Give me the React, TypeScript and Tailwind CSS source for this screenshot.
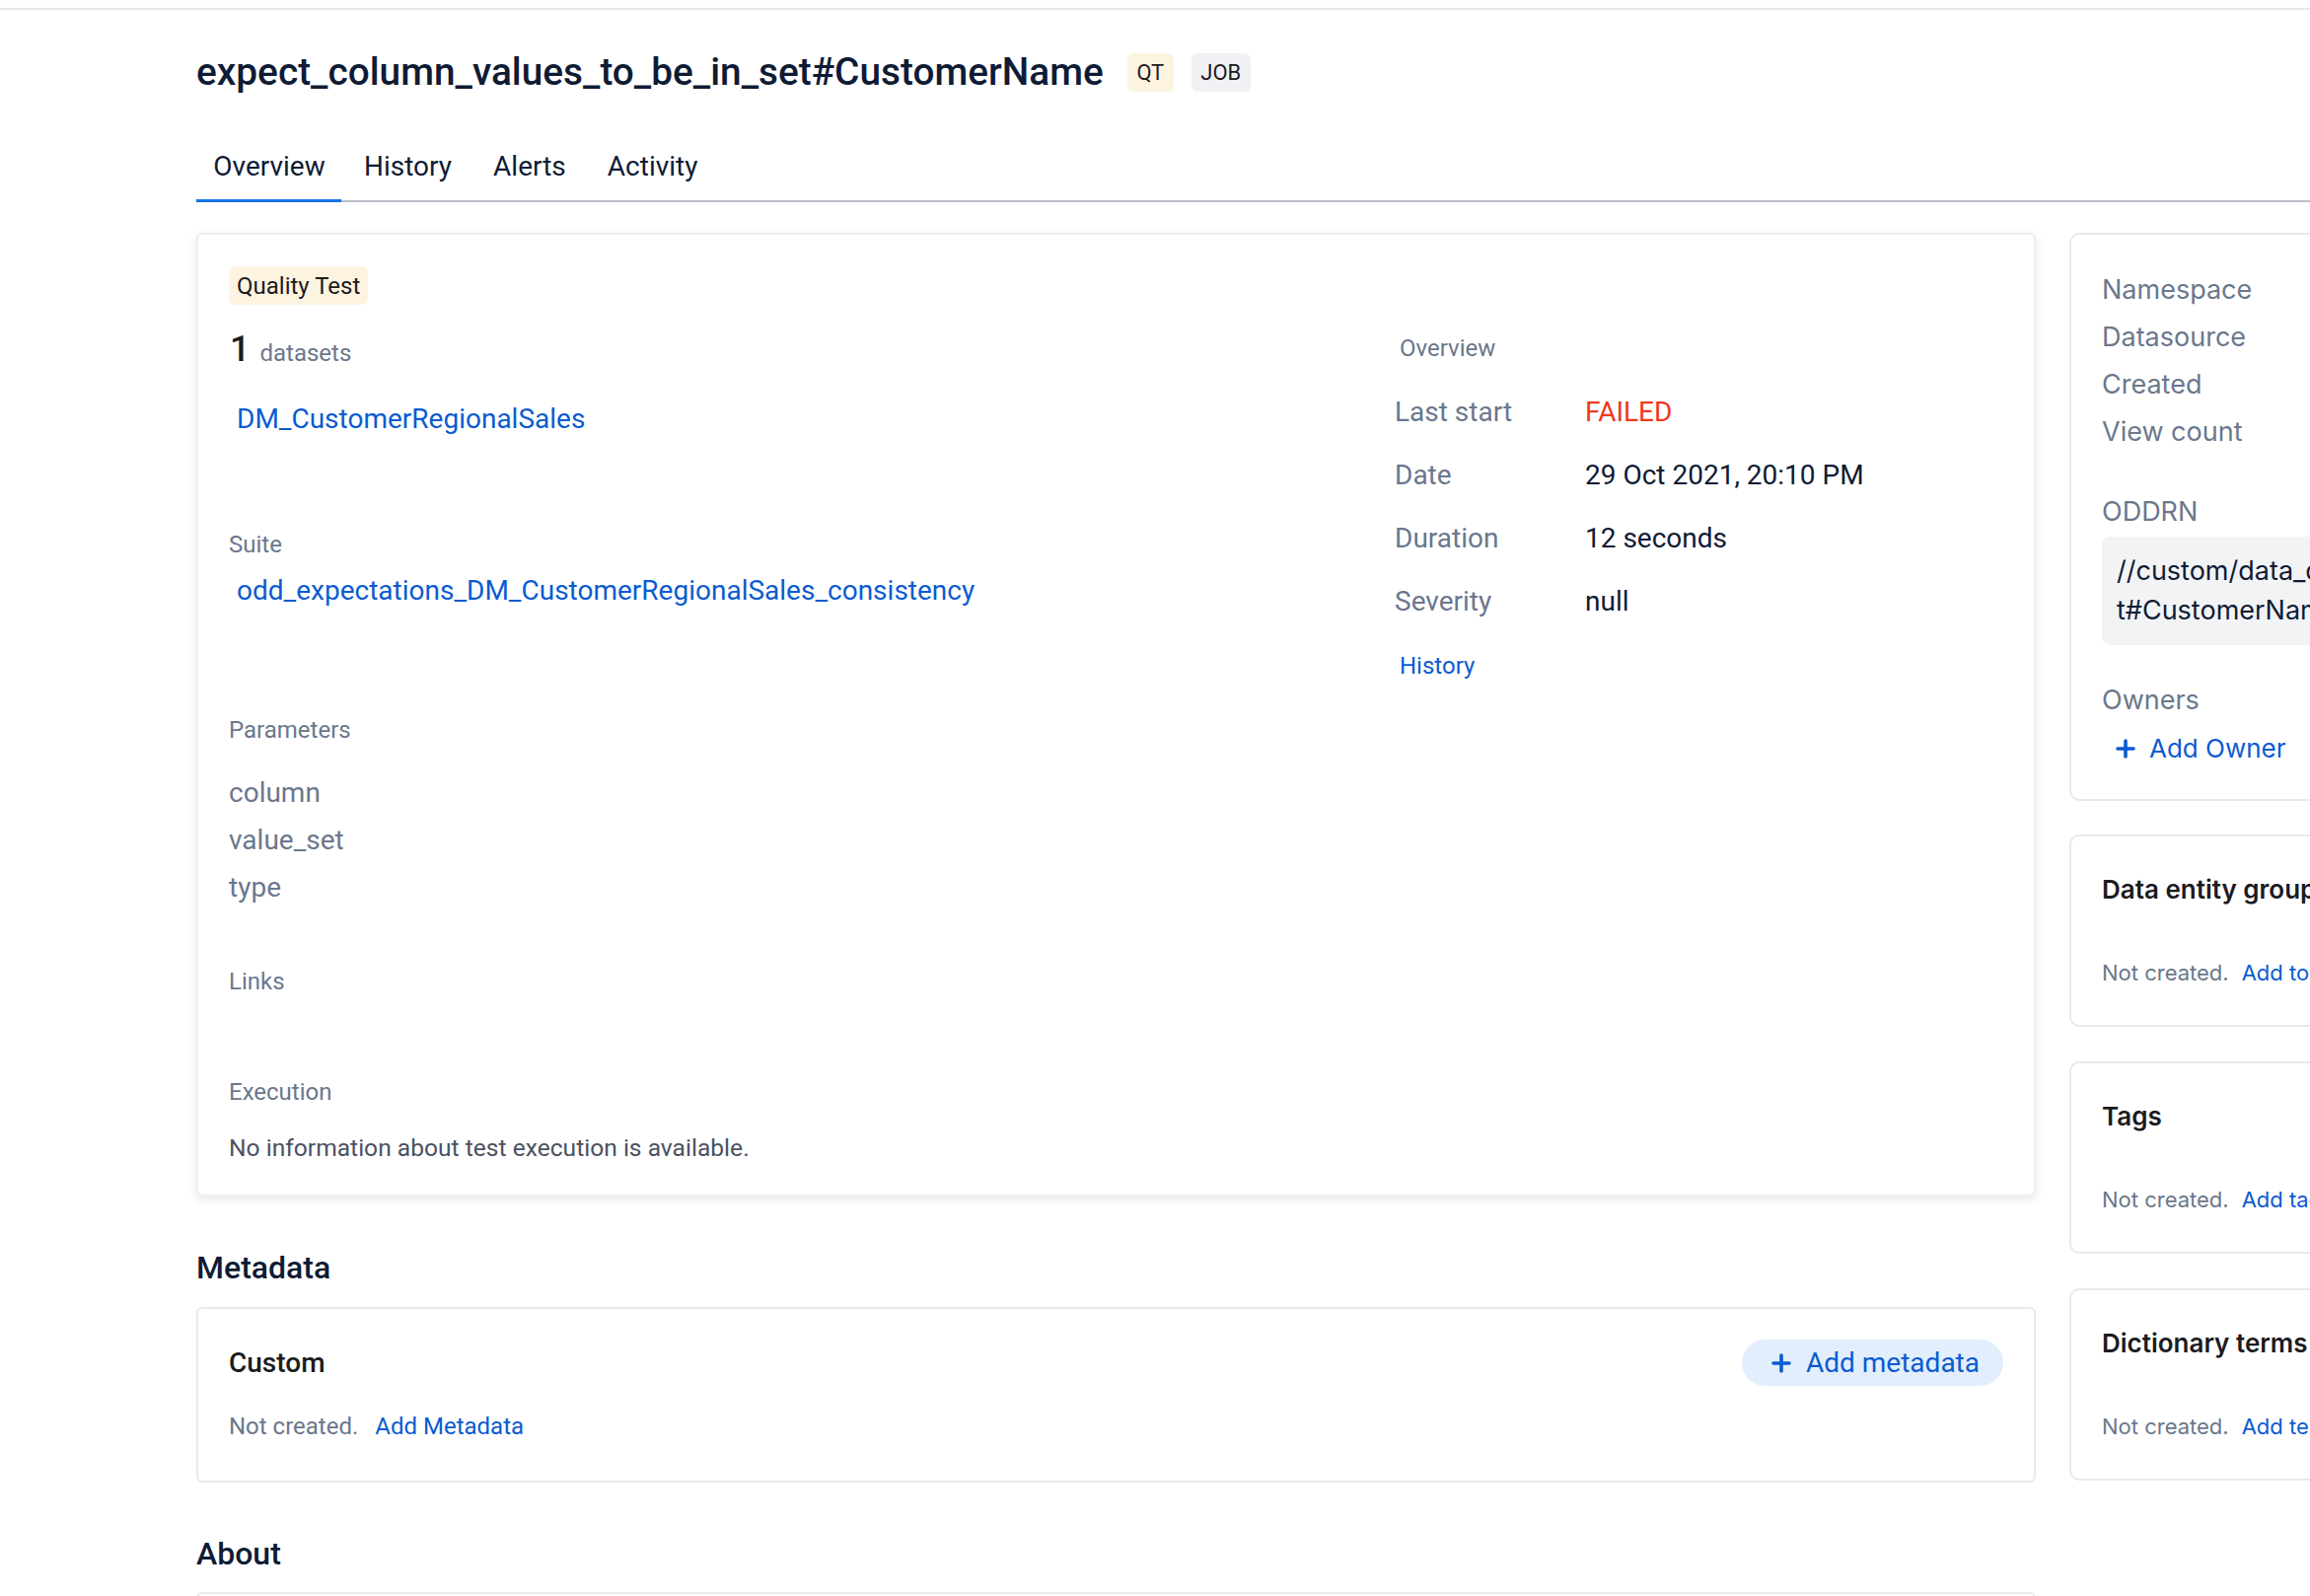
import React from "react"

const blue = "text-[#0b5bd1]"

function Plus({ className = "" }: { className?: string }) {
  return (
    <svg viewBox="0 0 20 20" className={className} fill="none">
      <path d="M10 2v16M2 10h16" stroke="currentColor" strokeWidth="3.6" strokeLinecap="round" />
    </svg>
  )
}

function OverviewRow({ label, value, valueClass = "text-[#0f1b35]" }: { label: string; value: string; valueClass?: string }) {
  return (
    <div className="flex h-[64px] items-center text-[28px]">
      <span className="w-[193px] text-[#6b778c]">{label}</span>
      <span className={valueClass}>{value}</span>
    </div>
  )
}

function SideCard({ title, action }: { title: string; action: string }) {
  return (
    <div className="mt-[35px] rounded-[10px] border-2 border-[#e8e9ee] pb-[37px] pl-[31px] pt-[34px]">
      <div className="whitespace-nowrap text-[26px] font-semibold leading-[40px] text-[#1b1b1f]">{title}</div>
      <div className="mt-[48px] flex whitespace-nowrap text-[22px] leading-[32px]">
        <span className="text-[#6b778c]">Not created.</span>
        <span className={`ml-[13px] ${blue}`}>{action}</span>
      </div>
    </div>
  )
}

export default function App() {
  return (
    <div className="h-[1618px] w-screen overflow-hidden bg-white font-[Roboto,sans-serif]">
      <div className="mt-[8px] h-[2px] w-full bg-[#e6e7eb]" />
      <div className="w-[2700px] pl-[199px]">
        {/* header */}
        <div className="mt-[39px] flex items-center">
          <h1 className="text-[38.8px] font-medium leading-[48px] text-[#0f1b35]">
            expect_column_values_to_be_in_set#CustomerName
          </h1>
          <span className="ml-[24px] flex h-[39px] w-[47px] items-center justify-center rounded-[6px] bg-[#fdf3e1] text-[22px] text-[#1c1c1c]">
            QT
          </span>
          <span className="ml-[18px] flex h-[39px] w-[60px] items-center justify-center rounded-[6px] bg-[#f0f1f4] text-[22px] text-[#1c1c1c]">
            JOB
          </span>
        </div>

        {/* tabs */}
        <div className="mt-[52px] flex border-b-2 border-[#babfc8] text-[28px] text-[#0f1b35]">
          <div className="-mb-[2px] w-[147px] border-b-[3px] border-[#1a73e8] pb-[13px] pl-[1px] text-center leading-[40px]">
            Overview
          </div>
          <div className="pl-[23px] pr-[21px] leading-[40px]">History</div>
          <div className="px-[21px] leading-[40px]">Alerts</div>
          <div className="px-[21px] leading-[40px]">Activity</div>
        </div>

        <div className="mt-[31px] flex items-start">
          {/* main column */}
          <div className="w-[1865px] shrink-0">
            <div className="flex rounded-[6px] border-2 border-[#eceef2] pb-[31px] pl-[30px] pt-[32px] shadow-[0_3px_10px_rgba(15,27,53,0.10)]">
              <div className="w-[1183px] shrink-0">
                <span className="ml-[1px] inline-flex h-[39px] items-center rounded-[6px] bg-[#fdf3e1] px-[8px] text-[24px] text-[#1c1c1c]">
                  Quality Test
                </span>
                <div className="mt-[25px] flex items-baseline leading-[40px]">
                  <span className="ml-[2px] text-[36px] font-medium text-[#1c1c1c]">1</span>
                  <span className="ml-[10px] text-[24px] text-[#6b778c]">datasets</span>
                </div>
                <div className={`mt-[27px] pl-[9px] text-[28px] leading-[40px] ${blue}`}>DM_CustomerRegionalSales</div>
                <div className="mt-[91px] pl-[1px] text-[24px] leading-[32px] text-[#6b778c]">Suite</div>
                <div className={`mt-[11px] pl-[9px] text-[28px] leading-[40px] ${blue}`}>
                  odd_expectations_DM_CustomerRegionalSales_consistency
                </div>
                <div className="mt-[105px] pl-[1px] text-[24px] leading-[32px] text-[#6b778c]">Parameters</div>
                <div className="mt-[24px] pl-[1px] text-[28px] leading-[48px] text-[#6b778c]">
                  <div>column</div>
                  <div>value_set</div>
                  <div>type</div>
                </div>
                <div className="mt-[55px] pl-[1px] text-[24px] leading-[32px] text-[#6b778c]">Links</div>
                <div className="mt-[80px] pl-[1px] text-[24px] leading-[32px] text-[#6b778c]">Execution</div>
                <div className="mt-[25px] pl-[1px] text-[24.6px] leading-[32px] text-[#4b5261]">
                  No information about test execution is available.
                </div>
              </div>
              <div className="pt-[67px]">
                <div className="pl-[5px] text-[24px] leading-[32px] text-[#6b778c]">Overview</div>
                <div className="mt-[17px]">
                  <OverviewRow label="Last start" value="FAILED" valueClass="text-[#f0381a]" />
                  <OverviewRow label="Date" value="29 Oct 2021, 20:10 PM" />
                  <OverviewRow label="Duration" value="12 seconds" />
                  <OverviewRow label="Severity" value="null" />
                </div>
                <div className={`mt-[17px] pl-[5px] text-[24px] leading-[32px] ${blue}`}>History</div>
              </div>
            </div>

            <h2 className="mt-[52px] text-[32px] font-medium leading-[40px] text-[#0f1b35]">Metadata</h2>
            <div className="mt-[20px] rounded-[6px] border-2 border-[#e8e9ee] pb-[39px] pl-[30px] pr-[31px] pt-[31px]">
              <div className="flex items-center justify-between">
                <span className="pl-[1px] text-[28px] font-medium text-[#1c1c1c]">Custom</span>
                <button className="flex h-[47px] items-center rounded-full bg-[#e2eefc] pl-[30px] pr-[24px] text-[28px] text-[#0b5bd1]">
                  <Plus className="h-[20px] w-[20px]" />
                  <span className="ml-[15px]">Add metadata</span>
                </button>
              </div>
              <div className="mt-[25px] flex pl-[1px] text-[24px] leading-[32px]">
                <span className="text-[#6b778c]">Not created.</span>
                <span className={`ml-[17px] ${blue}`}>Add Metadata</span>
              </div>
            </div>

            <h2 className="mt-[52px] text-[32px] font-medium leading-[40px] text-[#0f1b35]">About</h2>
            <div className="mt-[19px] h-[200px] rounded-[6px] border-2 border-[#e8e9ee]" />
          </div>

          {/* right column */}
          <div className="ml-[34px] w-[460px] shrink-0 font-[Inter,sans-serif]">
            <div className="rounded-[10px] border-2 border-[#e8e9ee] pb-[31px] pl-[31px] pt-[32px]">
              <div className="text-[27px] leading-[48px] text-[#6b778c]">
                <div>Namespace</div>
                <div>Datasource</div>
                <div>Created</div>
                <div>View count</div>
              </div>
              <div className="mt-[37px] text-[27px] leading-[40px] text-[#6b778c]">ODDRN</div>
              <div className="mt-[5px] overflow-hidden whitespace-nowrap rounded-[8px] bg-[#f2f3f5] py-[15px] pl-[15px] text-[27px] leading-[40px] text-[#0f1b35]">
                <div>//custom/data_quality_test/expect_column_values_to_be_in_se</div>
                <div>t#CustomerName</div>
              </div>
              <div className="mt-[36px] text-[27px] leading-[40px] text-[#6b778c]">Owners</div>
              <div className={`mt-[9px] flex items-center pl-[14px] text-[26px] leading-[40px] ${blue}`}>
                <Plus className="h-[20px] w-[20px]" />
                <span className="ml-[14px]">Add Owner</span>
              </div>
            </div>
            <div className="-mt-[1px]">
              <SideCard title="Data entity groups" action="Add to group" />
            </div>
            <SideCard title="Tags" action="Add tags" />
            <SideCard title="Dictionary terms" action="Add terms" />
          </div>
        </div>
      </div>
    </div>
  )
}
